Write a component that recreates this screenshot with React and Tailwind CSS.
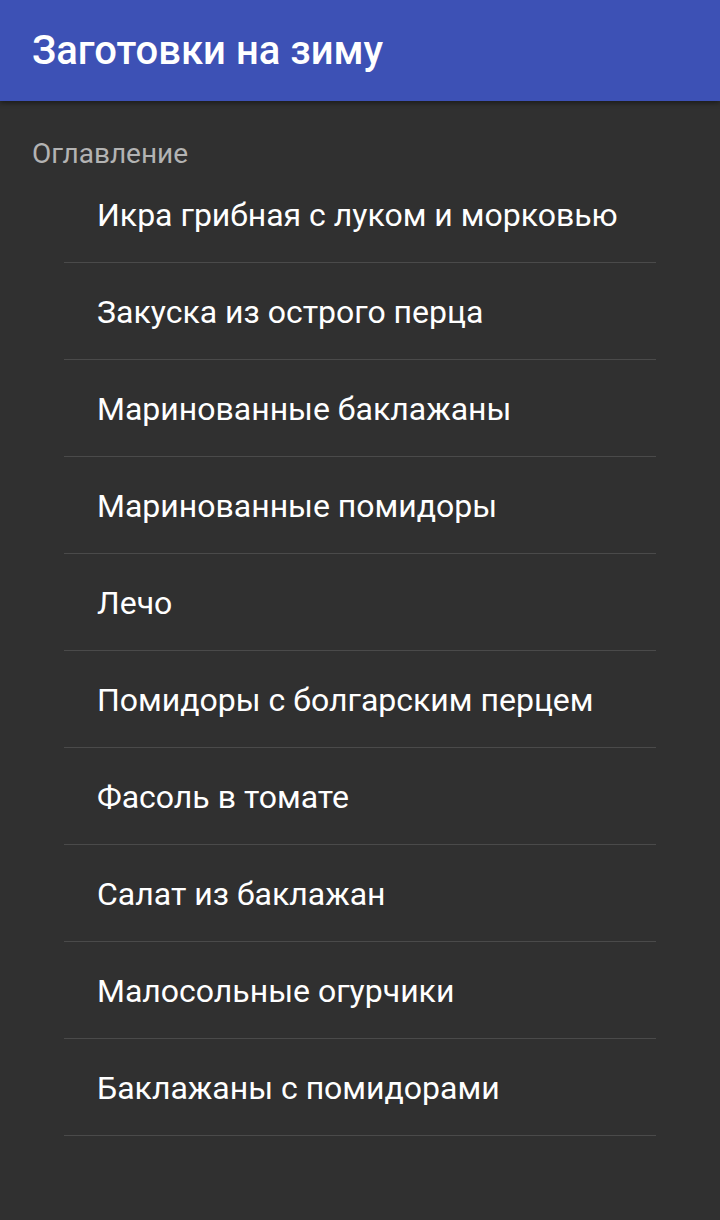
import React from "react";

const recipes = [
  "Икра грибная с луком и морковью",
  "Закуска из острого перца",
  "Маринованные баклажаны",
  "Маринованные помидоры",
  "Лечо",
  "Помидоры с болгарским перцем",
  "Фасоль в томате",
  "Салат из баклажан",
  "Малосольные огурчики",
  "Баклажаны с помидорами",
];

const App = () => {
  return (
    <div className="min-h-screen h-[1220px] bg-[#303030] font-['Roboto',sans-serif] overflow-hidden">
      {/* Toolbar */}
      <div className="relative z-10 h-[101px] bg-[#3d51b5] flex items-center px-8 shadow-[0_2px_5px_rgba(0,0,0,0.45)]">
        <h1 className="text-white text-[40px] font-medium leading-none">
          Заготовки на зиму
        </h1>
      </div>

      <div className="pt-[39px]">
        <div className="px-8 h-[26px] leading-[28px] text-[28px] text-[#b3b3b3]">Оглавление</div>
        <ul className="mx-16">
          {recipes.map((name) => (
            <li
              key={name}
              className="h-[97px] border-b border-[#4a4a4a] flex items-center pl-[33px] pt-[1px] text-white text-[32px] leading-none"
            >
              {name}
            </li>
          ))}
        </ul>
      </div>
    </div>
  );
};

export default App;
